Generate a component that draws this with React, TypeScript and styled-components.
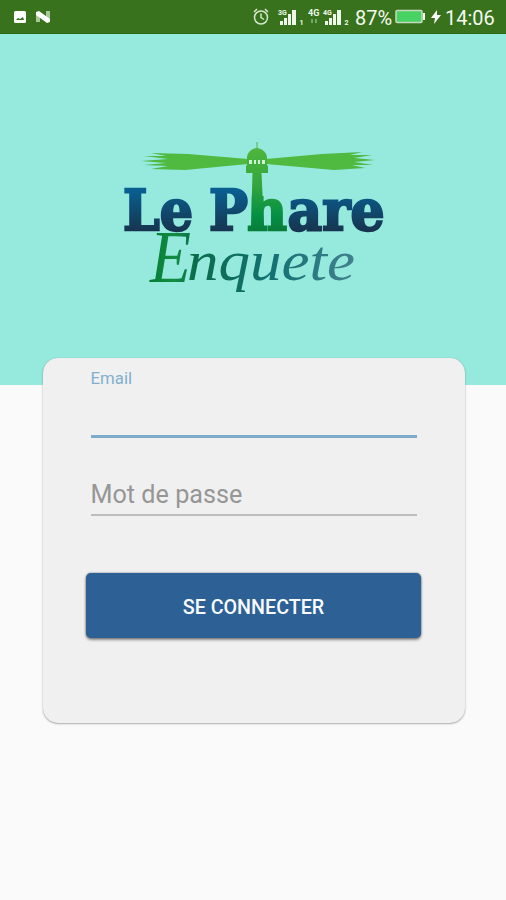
import React from 'react';
import styled, { createGlobalStyle } from 'styled-components';

const GlobalStyle = createGlobalStyle`
  * { box-sizing: border-box; }
  body { margin: 0; background: #fafafa; font-family: Roboto, sans-serif; }
`;

const Screen = styled.main`
  width: 506px;
  height: 900px;
  overflow: hidden;
  background: #fafafa;
`;

const StatusBar = styled.header`
  display: flex;
  align-items: center;
  height: 34px;
  padding: 1px 11px 0 13px;
  background: #38721c;
  border-bottom: 1px solid #2d6713;
  color: #f4faf0;
`;

const Notifications = styled.div`
  display: flex;
  align-items: center;
  gap: 9px;
  flex: 1;
`;

const StatusIcon = styled.svg`
  display: block;
  flex: none;
  overflow: visible;
`;

const StatusGroup = styled.div`
  display: flex;
  align-items: center;
  height: 32px;
`;

const StatusText = styled.span<{ $width: number }>`
  width: ${(p) => p.$width}px;
  font-size: 20px;
  line-height: 32px;
  padding-top: 2px;
  white-space: nowrap;
`;

const Hero = styled.section`
  height: 351px;
  background: #95e9dd;
  padding: 101px 0 0 113px;
`;

const Logo = styled.svg`
  display: block;
  overflow: visible;
`;

const Card = styled.form`
  display: flex;
  flex-direction: column;
  position: relative;
  width: 422px;
  height: 365px;
  margin: -27px 0 0 42.5px;
  padding: 11px 48px 0;
  border-radius: 15px;
  background: #f0f0f0;
  box-shadow: 0 1px 2px rgba(0, 0, 0, 0.3), 0 0 1px rgba(0, 0, 0, 0.2);
`;

const Field = styled.label<{ $active?: boolean }>`
  display: block;
  height: ${(p) => (p.$active ? 69 : 78)}px;
  padding-top: ${(p) => (p.$active ? 0 : 42)}px;
  border-bottom: ${(p) => (p.$active ? '3px solid #7dacca' : '2px solid #bdbdbd')};
  color: ${(p) => (p.$active ? '#82b0ce' : '#969696')};
  font-size: ${(p) => (p.$active ? 16.8 : 25.2)}px;
  line-height: ${(p) => (p.$active ? 18 : 30)}px;
`;

const SubmitButton = styled.button`
  width: 335px;
  height: 65px;
  margin: 57px 0 0 -5px;
  padding: 4px 0 0 1px;
  border: 0;
  border-radius: 5px;
  background: #2d6094;
  color: #f8fbff;
  font: 500 19.7px/24px Roboto, sans-serif;
  box-shadow: 0 2px 3px rgba(0, 0, 0, 0.4), 0 0 2px rgba(0, 0, 0, 0.5);
`;

function SignalIcon({ network, slot, dual }: { network: string; slot: string; dual?: boolean }) {
  const shift = dual ? 15 : 0;
  return (
    <StatusIcon width={dual ? 47 : 30} height="20" fill="#eff7eb" fontFamily="Roboto, sans-serif" fontWeight="700">
      {dual && (
        <>
          <text x="0" y="9" fontSize="9">4G</text>
          <path d="M4 12v4M8 12v4" stroke="#78a664" strokeWidth="2" />
        </>
      )}
      <text x={shift} y="8" fontSize="7">{network}</text>
      <path transform={`translate(${shift} 0)`} d="M2 14h3v4H2zM6 11h3v7H6zM10 7h3v11h-3zM14 3h4v15h-4z" />
      <text x={shift + 21.5} y="18" fontSize="7">{slot}</text>
    </StatusIcon>
  );
}

function LighthouseLogo() {
  return (
    <Logo width="280" height="170" viewBox="113 135 280 170" role="img" aria-label="Le Phare Enquete">
      <defs>
        <linearGradient id="navy" gradientUnits="userSpaceOnUse" x1="0" y1="188" x2="0" y2="232">
          <stop stopColor="#086193" />
          <stop offset="1" stopColor="#17334d" />
        </linearGradient>
        <linearGradient id="tower" gradientUnits="userSpaceOnUse" x1="0" y1="148" x2="0" y2="232">
          <stop stopColor="#4fb63e" />
          <stop offset="0.45" stopColor="#32a53c" />
          <stop offset="0.8" stopColor="#049044" />
          <stop offset="1" stopColor="#087b38" />
        </linearGradient>
        <linearGradient id="script" gradientUnits="userSpaceOnUse" x1="150" y1="0" x2="355" y2="0">
          <stop stopColor="#087d35" />
          <stop offset="0.12" stopColor="#128d42" />
          <stop offset="0.22" stopColor="#0a6c4b" />
          <stop offset="0.6" stopColor="#147173" />
          <stop offset="1" stopColor="#43818f" />
        </linearGradient>
        <clipPath id="lowerStem">
          <rect x="244" y="196" width="46" height="40" />
        </clipPath>
      </defs>
      <g fill="#50b940">
        <path d="M248 159L188 154L151 153L166 156L144 156L168 159L141 161L166 163L144 165L168 166L151 169L185 170L248 164Z" />
        <path d="M266 159L322 154L362 152L350 155L372 155L354 158L375 160L354 162L373 165L352 165L365 168L334 170L266 164Z" />
      </g>
      <g fontFamily="'DejaVu Serif', serif" fontWeight="700" fontSize="56" fill="url(#navy)" stroke="url(#navy)" strokeWidth="2.4">
        <text x="123" y="230" textLength="70" lengthAdjust="spacingAndGlyphs">Le</text>
        <text x="209" y="230" textLength="39" lengthAdjust="spacingAndGlyphs">P</text>
        <text x="287.500" y="230" textLength="97" lengthAdjust="spacingAndGlyphs">are</text>
        <g clipPath="url(#lowerStem)" fill="url(#tower)" stroke="url(#tower)">
          <text x="247" y="230" textLength="40" lengthAdjust="spacingAndGlyphs">h</text>
        </g>
      </g>
      <path d="M256.5 142h1v6Q266 150 267 157v8l1 1v7h-6.500l2.500 53h-13l1.500-53h-6.500v-7l1-1v-8Q248 150 256.500 148z" fill="url(#tower)" />
      <path d="M249 160h3v4h-3zM254 160h2v4h-2zM258 160h2v4h-2zM262 160h3v4h-3z" fill="#caf5d5" />
      <g fontFamily="'Liberation Serif', serif" fontStyle="italic" fill="url(#script)">
        <text x="150" y="282" fontSize="73" textLength="41" lengthAdjust="spacingAndGlyphs">E</text>
        <text x="187" y="280" fontSize="58" textLength="168" lengthAdjust="spacingAndGlyphs">nquete</text>
      </g>
    </Logo>
  );
}

export default function App() {
  return (
    <>
      <GlobalStyle />
      <Screen>
        <StatusBar>
          <Notifications>
            <StatusIcon width="14" height="14" viewBox="0 0 14 14">
              <rect x="1" y="1" width="12" height="12" rx="1.500" fill="#fff" />
              <path d="M3 10l2-2 2 1 3-2 1 3z" fill="#38721c" />
            </StatusIcon>
            <StatusIcon width="15" height="14" viewBox="0 0 15 14">
              <path d="M0 2h4v10H0zM10 1h4v11h-4z" fill="#a9c79c" />
              <path d="M0 2l3-1 11 8v3l-3 1L0 5z" fill="#fff" />
            </StatusIcon>
          </Notifications>
          <StatusGroup>
            <StatusIcon width="25" height="18" viewBox="0 0 25 18" fill="none" stroke="#d5e8cc" strokeWidth="1.500">
              <circle cx="8" cy="9.500" r="6.500" />
              <path d="M8 5.500v4l3 2M1 4l3-3M15 4l-3-3" />
            </StatusIcon>
            <SignalIcon network="3G" slot="1" />
            <SignalIcon network="4G" slot="2" dual />
            <StatusText $width={40}>87%</StatusText>
            <StatusIcon width="35" height="18" viewBox="0 0 35 18">
              <rect x="1" y="2.500" width="26" height="12" rx="1" fill="#48d263" stroke="#c7dac0" strokeWidth="1.500" />
              <path d="M28 5h2v7h-2z" fill="#f3faf0" />
            </StatusIcon>
            <StatusIcon width="15" height="18" viewBox="0 0 15 18">
              <path d="M7 2L1 10h4l-1 6 7-9H7z" fill="#fff" />
            </StatusIcon>
            <StatusText $width={50}>14:06</StatusText>
          </StatusGroup>
        </StatusBar>
        <Hero><LighthouseLogo /></Hero>
        <Card onSubmit={(event) => event.preventDefault()}>
          <Field $active>Email</Field>
          <Field>Mot de passe</Field>
          <SubmitButton type="submit">SE CONNECTER</SubmitButton>
        </Card>
      </Screen>
    </>
  );
}
